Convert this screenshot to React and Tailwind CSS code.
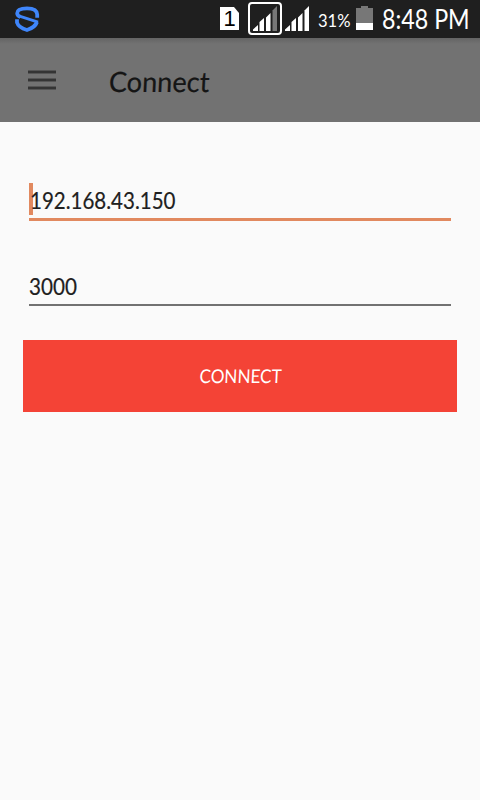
function SignalBars({ weakLast }) {
  return (
    <svg className="block h-[25px] w-6 shrink-0" viewBox="0 0 24 25">
      <path d="M0 25v-1.5L5 19v6zM6.5 25v-9L11 12v13zM13 25V11.5L17.5 7V25z" fill="#fff" />
      <path d="M19.5 25V4.5L24 0v25z" fill={weakLast ? '#777' : '#fff'} />
    </svg>
  );
}

function StatusBar() {
  return (
    <header className="flex h-[38px] shrink-0 items-start bg-[#1f1f1f] text-white">
      <svg className="ml-[14px] mt-[5px] h-7 w-7 shrink-0" viewBox="0 0 28 28" fill="none" stroke="#3f86fb">
        <path d="M23.2 12.8V9.5Q23 3.3 13 3.3 3.2 3.3 3.2 8.2q0 2.4 3.3 3.7" strokeWidth="3.8" />
        <path d="M5.5 11.2L24 17.2" strokeWidth="2.8" />
        <path d="M3 14.2v3.3Q4.5 22.5 13 25 21 22.6 23 17" strokeWidth="3.8" />
      </svg>
      <div className="ml-[178px] mt-[7px] flex h-[23px] w-[19px] shrink-0 items-center justify-center bg-white font-['Liberation_Sans',sans-serif] text-[22px] leading-none text-black [clip-path:polygon(0_0,14px_0,19px_6px,19px_100%,0_100%)]">
        1
      </div>
      <div className="ml-[9px] mt-[2px] flex h-[33px] w-[34px] shrink-0 justify-center rounded-[4px] border-2 border-white pt-[2px]">
        <SignalBars weakLast />
      </div>
      <div className="ml-[3px] mt-[6px] shrink-0">
        <SignalBars />
      </div>
      <div className="ml-[9px] mt-[9px] w-[38px] shrink-0 text-[18px] leading-[22px]">
        <span className="inline-block origin-left scale-x-[0.92]">31%</span>
      </div>
      <div className="mt-[6px] flex h-6 w-[17px] shrink-0 flex-col items-center">
        <div className="h-[2px] w-[7px] bg-[#777]" />
        <div className="h-[15px] w-full bg-[#777]" />
        <div className="h-[7px] w-full bg-white" />
      </div>
      <div className="ml-[9px] mt-[3px] w-[89px] shrink-0 whitespace-nowrap text-[27px] leading-[31px]">
        <span className="inline-block origin-left scale-x-[0.86]">8:48 PM</span>
      </div>
    </header>
  );
}

function MenuIcon() {
  return (
    <div className="mb-[1px] flex w-7 flex-col gap-1">
      <div className="h-1 border-y border-[#555] bg-[#343434]" />
      <div className="h-1 border-y border-[#555] bg-[#343434]" />
      <div className="h-1 border-y border-[#555] bg-[#343434]" />
    </div>
  );
}

export default function App() {
  return (
    <div className="flex h-[800px] w-[480px] flex-col overflow-hidden bg-[#fafafa] font-[Lato,sans-serif] text-[#202020]">
      <StatusBar />
      <div className="flex h-[84px] shrink-0 items-center bg-linear-to-b from-[#646464] to-[#727272] to-[6px] pl-7">
        <MenuIcon />
        <h1 className="ml-[53px] mt-[2px] origin-left scale-x-[0.97] -skew-x-3 text-[28px] leading-9 text-[#151515] [-webkit-text-stroke:0.2px_#151515]">
          Connect
        </h1>
      </div>
      <main className="flex flex-col px-[23px] pt-[61px]">
        <div className="mx-[6px] flex h-[38px] items-start border-b-[3px] border-[#e1895f]">
          <div className="h-8 w-1 bg-[#e1895f]" />
          <span className="-ml-[3px] mt-[1px] origin-left scale-x-[0.855] text-2xl [-webkit-text-stroke:0.2px_#202020]">
            192.168.43.150
          </span>
        </div>
        <div className="mx-[6px] mt-[51px] flex h-[34px] items-start border-b-2 border-[#727272]">
          <span className="-mt-[2px] origin-left scale-x-[0.86] text-2xl [-webkit-text-stroke:0.2px_#202020]">3000</span>
        </div>
        <button className="mt-[34px] flex h-[72px] items-center justify-center bg-[#f44336] text-white">
          <span className="ml-[1px] scale-x-[0.9] -skew-x-3 text-[19px]">CONNECT</span>
        </button>
      </main>
    </div>
  );
}
